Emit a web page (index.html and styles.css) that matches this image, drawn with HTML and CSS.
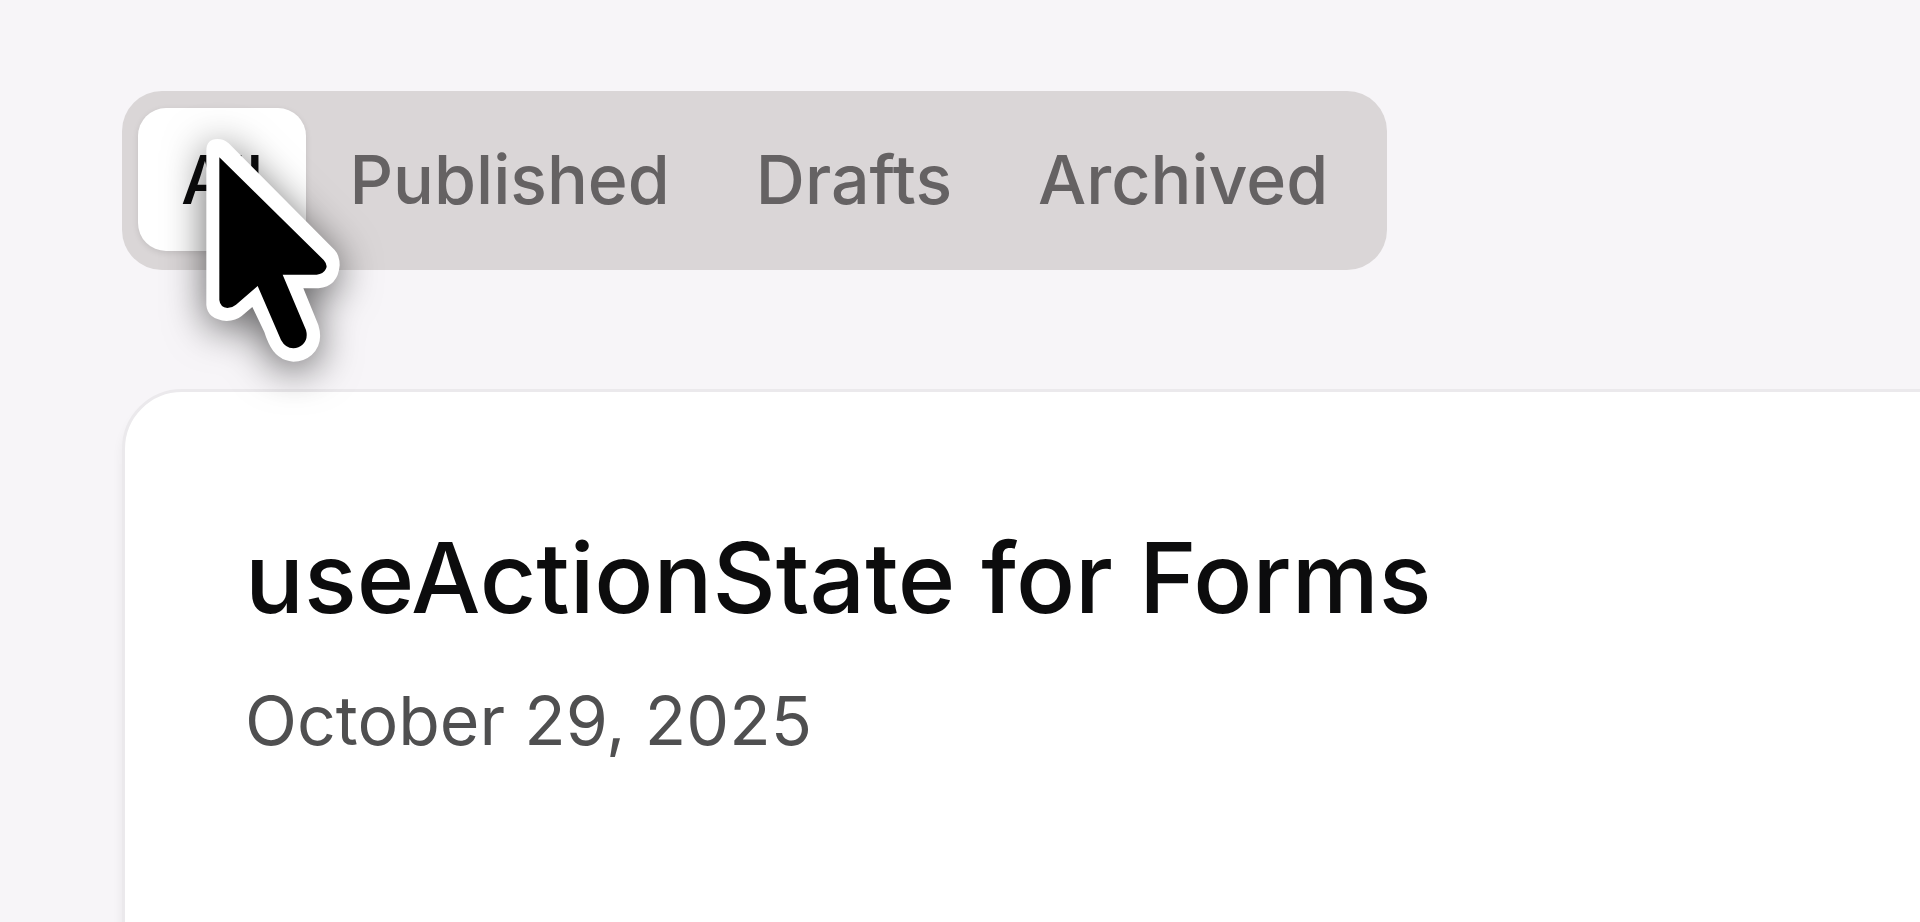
FILE: index.html
```
<!DOCTYPE html>
<html lang="en">
  <head>
    <meta charset="UTF-8" />
    <meta name="viewport" content="width=device-width, initial-scale=1.0" />
    <title>Posts</title>
    <link rel="stylesheet" href="styles.css">
  </head>
  <body>
    <main class="page">
      <div class="toolbar">
        <div class="tabs" role="tablist" aria-label="Post status">
          <button class="tab active" type="button" role="tab" aria-selected="true">All</button>
          <button class="tab" type="button" role="tab" aria-selected="false">Published</button>
          <button class="tab" type="button" role="tab" aria-selected="false">Drafts</button>
          <button class="tab" type="button" role="tab" aria-selected="false">Archived</button>
        </div>

        <!-- Pointer over the active tab -->
        <svg class="pointer" viewBox="300 189 438 702" aria-hidden="true">
          <path fill="#fff" d="M319 243Q319 207 352 207Q372 207 386 220L704 540Q719 556 719 586Q714 650 655 655L610 655L655 765Q672 820 635 855Q612 875 580 875Q530 872 506 820Q497 800 493 786L457 711L425 738Q408 752 380 753Q322 748 319 705Z" />
          <path fill="#000" d="M358 262L671 570Q685 586 677 598Q670 613 650 614L548 614L618 780Q625 806 609 823Q596 835 580 835Q556 834 543 810L473 648L408 704Q396 714 382 714Q360 711 358 690Z" />
        </svg>
      </div>

      <article class="card">
        <h2 class="card-title">useActionState for Forms</h2>
        <time class="card-date" datetime="2025-10-29">October 29, 2025</time>
      </article>
    </main>
  </body>
</html>
```

FILE: styles.css
```
:root {
  --background: #f7f5f8;
  --muted: #dad6d7;
  --muted-text: #656263;
  --card: #ffffff;
  --border: #ebe9ec;
  --text: #0c0c0d;
}

* {
  box-sizing: border-box;
}

body {
  margin: 0;
  font-family: Inter, "Liberation Sans", sans-serif;
  color: var(--text);
  background: var(--background);
}

.page {
  display: flex;
  flex-direction: column;
  gap: 119px;
  height: 100vh;
  padding: 91px 0 0 122px;
  overflow: hidden;
}

.toolbar {
  position: relative;
  display: flex;
}

.tabs {
  display: flex;
  padding: 17px 16px 19px;
  border-radius: 40px;
  background: var(--muted);
}

.tab {
  padding: 0 43px;
  border: 0;
  border-radius: 28px;
  font: inherit;
  font-size: 68px;
  font-weight: 500;
  line-height: 143px;
  color: var(--muted-text);
  background: transparent;
  cursor: pointer;
}

.tab.active {
  color: var(--text);
  background: var(--card);
  box-shadow: 0 2px 6px rgba(0, 0, 0, 0.1);
}

.pointer {
  position: absolute;
  top: 42px;
  left: 78px;
  width: 146px;
  height: 234px;
  overflow: visible;
  filter: drop-shadow(0 8px 20px rgba(0, 0, 0, 0.6));
}

/* The card runs past the right and bottom edges of the window */
.card {
  flex: 1 0 auto;
  display: flex;
  flex-direction: column;
  gap: 30px;
  margin: 0 -80px -80px 0;
  padding: 124px 120px;
  border: 3px solid var(--border);
  border-radius: 60px;
  background: var(--card);
  box-shadow: 0 10px 12px rgba(0, 0, 0, 0.06);
}

.card-title {
  margin: 0;
  font-size: 98px;
  font-weight: 500;
  line-height: 124px;
}

.card-date {
  font-size: 68px;
  line-height: 100px;
  color: #4f4f50;
}
```
